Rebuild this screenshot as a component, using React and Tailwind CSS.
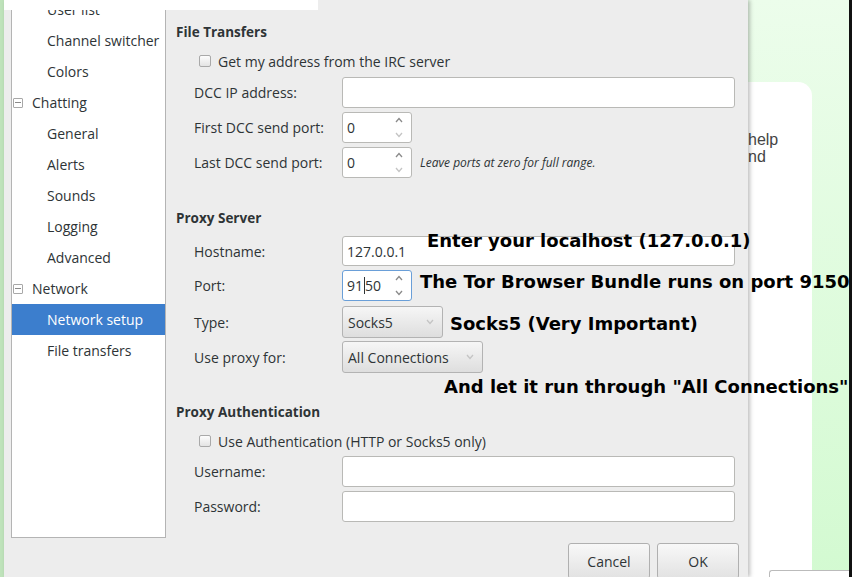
import React from 'react';

const ui = { fontFamily: '"Open Sans", "Noto Sans", sans-serif' };
const note = { fontFamily: '"DejaVu Sans", "Liberation Sans", sans-serif' };

const tree = [
  { label: 'User list', level: 1 },
  { label: 'Channel switcher', level: 1 },
  { label: 'Colors', level: 1 },
  { label: 'Chatting', level: 0 },
  { label: 'General', level: 1 },
  { label: 'Alerts', level: 1 },
  { label: 'Sounds', level: 1 },
  { label: 'Logging', level: 1 },
  { label: 'Advanced', level: 1 },
  { label: 'Network', level: 0 },
  { label: 'Network setup', level: 1, selected: true },
  { label: 'File transfers', level: 1 },
];

const Chevron = ({ up, light }) => (
  <svg width="8" height="6" viewBox="0 0 8 6" className="block">
    <path
      d={up ? 'M1 5 L4 1.5 L7 5' : 'M1 1 L4 4.5 L7 1'}
      fill="none"
      stroke={light ? '#c4c4c4' : '#8a8a8a'}
      strokeWidth="1.3"
    />
  </svg>
);

const Checkbox = ({ label }) => (
  <div className="h-[20px] flex items-center pl-[23px] gap-[7px]">
    <div className="w-[12px] h-[12px] rounded-[2px] border border-[#a9a9a9] bg-gradient-to-b from-[#fdfdfd] to-[#e4e4e4]" />
    <span className="text-[14px] text-[#2e3436]">{label}</span>
  </div>
);

const Label = ({ children }) => (
  <div className="w-[166px] pl-[18px] text-[14px] text-[#2e3436] shrink-0">{children}</div>
);

const Entry = ({ value, h = 'h-[31px]' }) => (
  <div className={`flex items-center ${h}`}>
    <Label>{value[0]}</Label>
    <div className="w-[393px] h-full bg-white border border-[#b9b9b6] rounded-[3px] flex items-center pl-[4px] text-[14px] text-[#2e3436]">
      {value[1]}
    </div>
  </div>
);

const Spin = ({ label, value, focus, light, hint }) => (
  <div className="flex items-center h-[31px]">
    <Label>{label}</Label>
    <div
      className={`w-[70px] h-full bg-white rounded-[3px] border flex items-center ${
        focus ? 'border-[#6a9fd8]' : 'border-[#b9b9b6]'
      }`}
    >
      <div className="flex-1 pl-[4px] text-[14px] text-[#2e3436] flex items-center">{value}</div>
      <div className="w-[14px] h-full flex flex-col justify-between py-[4px] mr-[2px]">
        <Chevron up />
        <Chevron light={light} />
      </div>
    </div>
    {hint && <span className="ml-[8px] text-[12px] italic text-[#2e3436]">{hint}</span>}
  </div>
);

const Combo = ({ label, value, w }) => (
  <div className="flex items-center h-[32px]">
    <Label>{label}</Label>
    <div
      className={`${w} h-full rounded-[3px] border border-[#b3b3b3] bg-gradient-to-b from-[#f6f6f6] to-[#dedede] flex items-center justify-between pl-[5px] pr-[8px] text-[14px] text-[#2e3436]`}
    >
      <span>{value}</span>
      <Chevron light />
    </div>
  </div>
);

const Header = ({ children }) => (
  <div className="h-[20px] leading-[20px] text-[13.5px] font-bold text-[#2e3436]">{children}</div>
);

const Button = ({ children }) => (
  <div className="w-[82px] h-[36px] rounded-[3px] border border-[#b0b0b0] bg-gradient-to-b from-[#f8f8f8] to-[#e2e2e2] flex items-center justify-center text-[14px] text-[#2e3436]">
    {children}
  </div>
);

export default function App() {
  return (
    <div className="relative w-[852px] h-[577px] overflow-hidden flex bg-[#d6fbd4]" style={ui}>
      {/* left edge of the page behind */}
      <div className="w-[4px] bg-[#bfe3bb] shrink-0" />

      {/* preferences dialog */}
      <div className="relative z-10 w-[744px] shrink-0 bg-[#ededed] flex shadow-[2px_0_4px_rgba(0,0,0,0.25)]">
        {/* category tree */}
        <div className="ml-[7px] w-[155px] h-[538px] bg-white border border-[#b4b4b4] border-t-0 overflow-hidden shrink-0">
          <div className="-mt-[6px]">
            {tree.map((item) => (
              <div
                key={item.label}
                className={`h-[31px] flex items-center text-[14px] ${
                  item.selected ? 'bg-[#3c7ecd] text-white' : 'text-[#2e3436]'
                } ${item.level ? 'pl-[35px]' : 'pl-[1px]'}`}
              >
                {!item.level && (
                  <div className="w-[10px] h-[10px] border border-[#a8a8a8] rounded-[1px] flex items-center justify-center mr-[9px]">
                    <div className="w-[6px] h-px bg-[#8a8a8a]" />
                  </div>
                )}
                {item.label}
              </div>
            ))}
          </div>
        </div>

        {/* settings form */}
        <div className="ml-[10px] pt-[22px] flex flex-col w-[563px]">
          <Header>File Transfers</Header>
          <div className="mt-[9px]">
            <Checkbox label="Get my address from the IRC server" />
          </div>
          <div className="mt-[6px]">
            <Entry value={['DCC IP address:', '']} />
          </div>
          <div className="mt-[4px]">
            <Spin label="First DCC send port:" value="0" light />
          </div>
          <div className="mt-[4px]">
            <Spin label="Last DCC send port:" value="0" light hint="Leave ports at zero for full range." />
          </div>

          <div className="mt-[30px]">
            <Header>Proxy Server</Header>
          </div>
          <div className="mt-[8px]">
            <Entry value={['Hostname:', '127.0.0.1']} h="h-[30px]" />
          </div>
          <div className="mt-[4px]">
            <Spin
              label="Port:"
              focus
              value={
                <>
                  91<span className="inline-block w-px h-[17px] bg-[#2e3436] mx-[0.5px]" />50
                </>
              }
            />
          </div>
          <div className="mt-[5px]">
            <Combo label="Type:" value="Socks5" w="w-[101px]" />
          </div>
          <div className="mt-[3px]">
            <Combo label="Use proxy for:" value="All Connections" w="w-[141px]" />
          </div>

          <div className="mt-[29px]">
            <Header>Proxy Authentication</Header>
          </div>
          <div className="mt-[9px]">
            <Checkbox label="Use Authentication (HTTP or Socks5 only)" />
          </div>
          <div className="mt-[5px]">
            <Entry value={['Username:', '']} />
          </div>
          <div className="mt-[4px]">
            <Entry value={['Password:', '']} />
          </div>

          <div className="mt-[21px] flex justify-end gap-[7px]">
            <Button>Cancel</Button>
            <Button>OK</Button>
          </div>
        </div>
      </div>

      {/* web page behind the dialog */}
      <div className="relative flex-1 bg-gradient-to-b from-[#ecfdeb] to-[#d3fad1]">
        <div className="mt-[82px] w-[64px] h-[495px] bg-white rounded-tr-[14px] pt-[49px] overflow-hidden">
          <div className="text-[16px] leading-[17px] text-[#444]" style={{ fontFamily: '"Liberation Sans", Arial, sans-serif' }}>
            <div>help</div>
            <div>nd</div>
          </div>
        </div>
        <div className="absolute right-[3px] bottom-0 w-[80px] h-[7px] bg-white border-t border-l border-[#bbb] rounded-tl-[3px]" />
        <div className="absolute right-0 top-0 bottom-0 w-[3px] bg-[#111]" />
      </div>

      {/* strip of another window at the top */}
      <div className="absolute left-[4px] top-0 w-[314px] h-[10px] bg-white z-20" />

      {/* annotations */}
      <div className="absolute inset-0 z-30 pointer-events-none text-[18px] font-bold text-black leading-none" style={note}>
        <div className="absolute left-[427px] top-[232px]">Enter your localhost (127.0.0.1)</div>
        <div className="absolute left-[420px] top-[273px]">The Tor Browser Bundle runs on port 9150</div>
        <div className="absolute left-[450px] top-[315px]">Socks5 (Very Important)</div>
        <div className="absolute left-[444px] top-[378px]">And let it run through "All Connections"</div>
      </div>
    </div>
  );
}
